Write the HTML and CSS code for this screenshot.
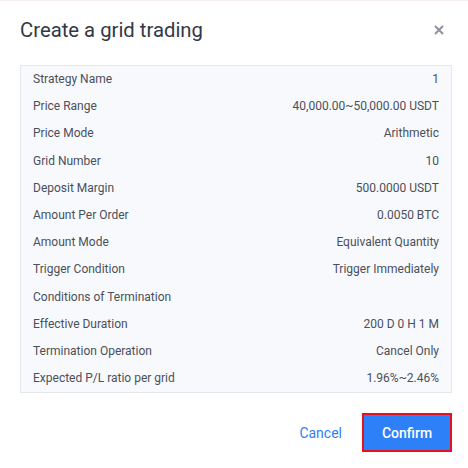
FILE: index.html
```html
<!DOCTYPE html>
<html>
<head>
<meta charset="utf-8">
<link rel="stylesheet" href="styles.css">
</head>
<body>
<div class="dialog">
  <div class="header">
    <div class="title">Create a grid trading</div>
    <svg class="close" width="10" height="10" viewBox="0 0 10 10"><path d="M1 1L9 9M9 1L1 9" stroke="#8c929d" stroke-width="2" stroke-linecap="butt"/></svg>
  </div>
  <div class="box">
    <div class="row"><span>Strategy Name</span><span>1</span></div>
    <div class="row"><span>Price Range</span><span>40,000.00~50,000.00 USDT</span></div>
    <div class="row"><span>Price Mode</span><span>Arithmetic</span></div>
    <div class="row"><span>Grid Number</span><span>10</span></div>
    <div class="row"><span>Deposit Margin</span><span>500.0000 USDT</span></div>
    <div class="row"><span>Amount Per Order</span><span>0.0050 BTC</span></div>
    <div class="row"><span>Amount Mode</span><span>Equivalent Quantity</span></div>
    <div class="row"><span>Trigger Condition</span><span>Trigger Immediately</span></div>
    <div class="row"><span>Conditions of Termination</span><span></span></div>
    <div class="row"><span>Effective Duration</span><span>200 D 0 H 1 M</span></div>
    <div class="row"><span>Termination Operation</span><span>Cancel Only</span></div>
    <div class="row"><span>Expected P/L ratio per grid</span><span>1.96%~2.46%</span></div>
  </div>
  <div class="footer">
    <button class="btn cancel">Cancel</button>
    <button class="btn confirm">Confirm</button>
  </div>
</div>
</body>
</html>
```
FILE: styles.css
```css
html, body {
  margin: 0;
  padding: 0;
  background: #ffffff;
}
body {
  font-family: Roboto, "Liberation Sans", sans-serif;
  border-top: 1px solid #f6eff6;
}
.dialog {
  padding: 0 16px 0 20px;
}
.header {
  display: flex;
  align-items: center;
  justify-content: space-between;
  height: 58px;
  padding-right: 8px;
}
.title {
  font-size: 20.3px;
  line-height: 24px;
  color: #323844;
}
.close {
  display: block;
}
.box {
  margin-top: 6px;
  background: #f8f9fc;
  border: 1px solid #e4e7ec;
  padding: 0 12px;
  width: 406px;
}
.row {
  display: flex;
  justify-content: space-between;
  height: 27.2px;
  line-height: 27.2px;
  font-size: 12px;
  color: #4a505b;
}
.footer {
  display: flex;
  justify-content: flex-end;
  margin-top: 20px;
}
.btn {
  font-family: Roboto, "Liberation Sans", sans-serif;
  font-size: 14px;
  height: 39px;
  border: none;
  background: none;
  cursor: pointer;
}
.cancel {
  color: #2f80f7;
  padding: 0 20px;
}
.confirm {
  width: 90px;
  background: #2d80f8;
  color: #ffffff;
  font-weight: 500;
  border: 2px solid #e8101e;
}
```
